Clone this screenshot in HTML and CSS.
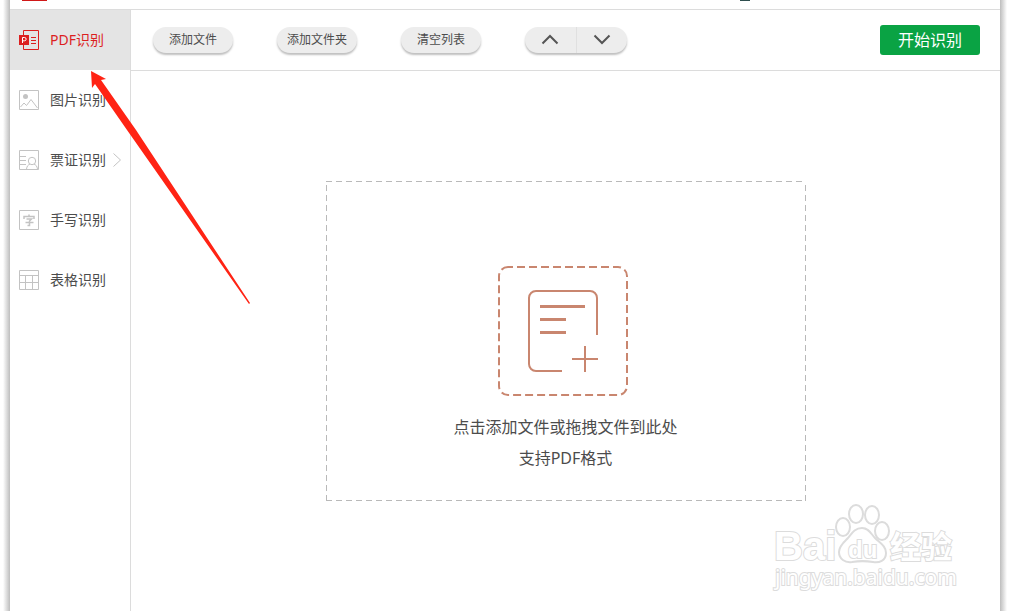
FILE: index.html
```html
<!DOCTYPE html>
<html lang="zh-CN">
  <head>
    <meta charset="UTF-8" />
    <meta name="viewport" content="width=device-width, initial-scale=1.0" />
    <title>PDF识别</title>
    <link rel="stylesheet" href="styles.css">
  </head>
  <body>
    <div class="window">
      <header class="titlebar">
        <span class="logo"></span>
        <span class="avatar"></span>
      </header>
      <div class="content">
        <nav class="sidebar">
          <a href="#" class="item active">
            <svg class="icon" viewBox="0 0 20 20">
              <path d="M4.500 5V.5h15v19h-15V15" />
              <path class="solid" d="M0 5h10v10H0z" />
              <path d="M12 7.500h5M12 10.500h5M12 13.500h5" />
              <path class="letter" d="M3.500 13V7.500H5.500a1.500 1.500 0 0 1 0 3.300H3.500" />
            </svg>
            <span>PDF识别</span>
          </a>
          <a href="#" class="item">
            <svg class="icon" viewBox="0 0 20 20">
              <path d="M.5.5h19v19H.5z" />
              <circle class="solid" cx="6.500" cy="6.500" r="2.500" />
              <path d="M1.500 17L5 13l2.500 2.500L12 9.500l6.500 8.500" />
            </svg>
            <span>图片识别</span>
          </a>
          <a href="#" class="item">
            <svg class="icon" viewBox="0 0 20 20">
              <path d="M.5.5h19v19H.5zM1 6.500h6M1 10.500h6M1 14.500h6" />
              <circle cx="13" cy="11" r="3.700" />
              <path d="M7.500 19c.5-3 1.500-4 3.500-5M18.500 19c-.5-3-1.500-4-3.500-5" />
            </svg>
            <span>票证识别</span>
            <svg class="more" viewBox="0 0 8 14">
              <path d="M.5.5L7.500 7L.5 13.500" />
            </svg>
          </a>
          <a href="#" class="item">
            <svg class="icon" viewBox="0 0 20 20">
              <path d="M.5.5h19v19H.5z" />
              <path class="thick" d="M10 4.500v2M5 9V6.500h10V9M7.500 9h5L10.500 11v4.500H8.500M6.500 12.500h8" />
            </svg>
            <span>手写识别</span>
          </a>
          <a href="#" class="item">
            <svg class="icon" viewBox="0 0 20 20">
              <path d="M.5.5h19v19H.5zM1 5.500h18M1 12.500h18M6.500 6v13M13.500 6v13" />
            </svg>
            <span>表格识别</span>
          </a>
        </nav>
        <main class="main">
          <div class="toolbar">
            <button class="pill">添加文件</button>
            <button class="pill">添加文件夹</button>
            <button class="pill">清空列表</button>
            <div class="move">
              <button aria-label="上移">
                <svg width="18" height="12" viewBox="0 0 18 12"><path d="M1.500 9.500L9 2l7.500 7.500" /></svg>
              </button>
              <button aria-label="下移">
                <svg width="18" height="12" viewBox="0 0 18 12"><path d="M1.500 1.500L9 9l7.500-7.500" /></svg>
              </button>
            </div>
            <button class="start">开始识别</button>
          </div>
          <div class="workspace">
            <section class="drop">
              <svg class="drop-icon" width="136" height="130" viewBox="0 0 136 130">
                <rect x="1" y="1" width="128" height="128" rx="9" stroke-dasharray="8 4" stroke-dashoffset="3" />
                <path d="M99 69V32a7 7 0 0 0-7-7H38a7 7 0 0 0-7 7v66a7 7 0 0 0 7 7h26" />
                <path class="bold" d="M42 40.500h45M42 53.500h26M42 66.500h26" />
                <path d="M74 93h26M87 80v26" />
              </svg>
              <p>点击添加文件或拖拽文件到此处</p>
              <p>支持PDF格式</p>
            </section>
          </div>
        </main>
      </div>
    </div>

    <!-- red pointer over the menu -->
    <svg class="pointer" width="162" height="236" viewBox="0 0 162 236">
      <path d="M1 1l15 8-5 1L46 60 160 233l-1 1L37 60 5 14 2 18z" />
    </svg>

    <!-- watermark -->
    <svg class="watermark" width="190" height="94" viewBox="0 0 190 94">
      <text class="latin" x="2" y="57">Bai</text>
      <ellipse cx="71" cy="24" rx="7" ry="9" />
      <ellipse cx="84" cy="11" rx="7" ry="9" />
      <ellipse cx="100" cy="12" rx="7" ry="9" />
      <ellipse cx="110" cy="28" rx="7" ry="9" />
      <path d="M90 25c7 0 9 6 13 10 5 5 11 8 11 15 0 8-7 10-13 9-6-1-15-1-21 0-7 1-13-3-13-10 0-6 5-10 9-14 4-5 7-10 14-10z" />
      <text class="du" x="76" y="55">du</text>
      <text class="cjk" x="118" y="55">经验</text>
      <text class="site" x="3" y="82">jingyan.baidu.com</text>
    </svg>
  </body>
</html>
```
FILE: styles.css
```css
* {
  box-sizing: border-box;
}
html {
  background-color: #fff;
}
body {
  margin: 0;
  padding: 0 10px;
  min-height: calc(100vh - 2px);
  display: flex;
  position: relative;
  background:
    linear-gradient(90deg, #fff 3px, #bdbdbd) left / 10px 100% no-repeat,
    linear-gradient(270deg, #fff 3px, #bdbdbd) right / 10px 100% no-repeat;
  color: #4c4c4c;
  font-family: "Noto Sans", "Noto Sans CJK SC", sans-serif;
}
button {
  border: none;
  padding: 0;
  font-family: inherit;
  color: inherit;
  cursor: pointer;
}
svg {
  fill: none;
  flex-shrink: 0;
}
.window {
  flex: 1;
  display: flex;
  flex-direction: column;
  background-color: #fff;
}
.titlebar {
  height: 10px;
  padding-left: 12px;
  padding-right: 250px;
  display: flex;
  justify-content: space-between;
  border-bottom: 1px solid #dcdcdc;
}
.logo {
  width: 25px;
  height: 1px;
  background-color: #d01818;
}
.avatar {
  width: 10px;
  height: 1px;
  background-color: #2f4f4f;
}
.content {
  flex: 1;
  display: flex;
}

/* left menu */
.sidebar {
  width: 121px;
  border-right: 1px solid #dcdcdc;
}
.item {
  height: 60px;
  padding-left: 9px;
  display: flex;
  align-items: center;
  font-size: 14px;
  line-height: 20px;
  color: #4c4c4c;
  text-decoration: none;
}
.item.active {
  background-color: #e4e4e4;
  color: #dc1f1f;
}
.icon {
  width: 20px;
  height: 20px;
  margin-right: 11px;
  stroke: #c3c3c3;
}
.icon .solid {
  fill: #c3c3c3;
  stroke: none;
}
.active .icon {
  stroke: #dc1f1f;
}
.active .icon .solid {
  fill: #dc1f1f;
}
.active .icon .letter {
  stroke: #fff;
}
.icon .thick {
  stroke-width: 1.5;
}
.more {
  width: 8px;
  height: 14px;
  margin-left: 7px;
  stroke: #c3c3c3;
}

/* top buttons */
.main {
  flex: 1;
  display: flex;
  flex-direction: column;
}
.toolbar {
  height: 61px;
  padding: 0 20px 0 22px;
  display: flex;
  align-items: center;
  gap: 44px;
  border-bottom: 1px solid #dcdcdc;
}
.pill,
.move {
  height: 26px;
  border-radius: 13px;
  background-color: #ededed;
  box-shadow: 0 2px 2px rgba(0, 0, 0, 0.25);
}
.pill {
  width: 80px;
  font-size: 12px;
  line-height: 26px;
}
.move {
  width: 102px;
  display: flex;
}
.move button {
  flex: 1;
  display: flex;
  align-items: center;
  justify-content: center;
  background: none;
}
.move button + button {
  border-left: 1px solid #e0e0e0;
}
.move svg {
  stroke: #555;
  stroke-width: 2;
}
.start {
  width: 100px;
  height: 30px;
  margin-left: auto;
  border-radius: 3px;
  background-color: #0aa344;
  color: #fff;
  font-size: 16px;
  line-height: 30px;
}

/* drop area, dashes are 6px with 4px between */
.workspace {
  flex: 1;
  display: flex;
  align-items: center;
  justify-content: center;
}
.drop {
  width: 480px;
  height: 320px;
  padding-top: 85px;
  text-align: center;
  background:
    repeating-linear-gradient(90deg, #b9b9b9 0 6px, transparent 6px 10px) top / 100% 1px no-repeat,
    repeating-linear-gradient(90deg, #b9b9b9 0 6px, transparent 6px 10px) bottom / 100% 1px no-repeat,
    repeating-linear-gradient(transparent 0 4px, #b9b9b9 4px 10px) left / 1px 100% no-repeat,
    repeating-linear-gradient(transparent 0 4px, #b9b9b9 4px 10px) right / 1px 100% no-repeat;
}
.drop-icon {
  display: block;
  margin: 0 auto 16px;
  stroke: #c9866f;
  stroke-width: 2;
}
.drop-icon .bold {
  stroke-width: 3;
}
.drop p {
  margin: 0;
  font-size: 16px;
  line-height: 31px;
}

.pointer {
  position: absolute;
  left: 90px;
  top: 70px;
  fill: #ff2314;
  pointer-events: none;
}
.watermark {
  position: absolute;
  right: 48px;
  bottom: 14px;
  fill: #fff;
  stroke: #dcdcdc;
  stroke-width: 2;
  pointer-events: none;
}
.watermark text {
  font-family: "Liberation Sans", "Noto Sans CJK SC", sans-serif;
  font-weight: bold;
  paint-order: stroke;
}
.watermark .latin {
  font-size: 40px;
}
.watermark .du {
  font-size: 24px;
}
.watermark .cjk {
  font-size: 31px;
}
.watermark .site {
  font-family: "Noto Sans", sans-serif;
  font-size: 21px;
  font-weight: normal;
}
```
